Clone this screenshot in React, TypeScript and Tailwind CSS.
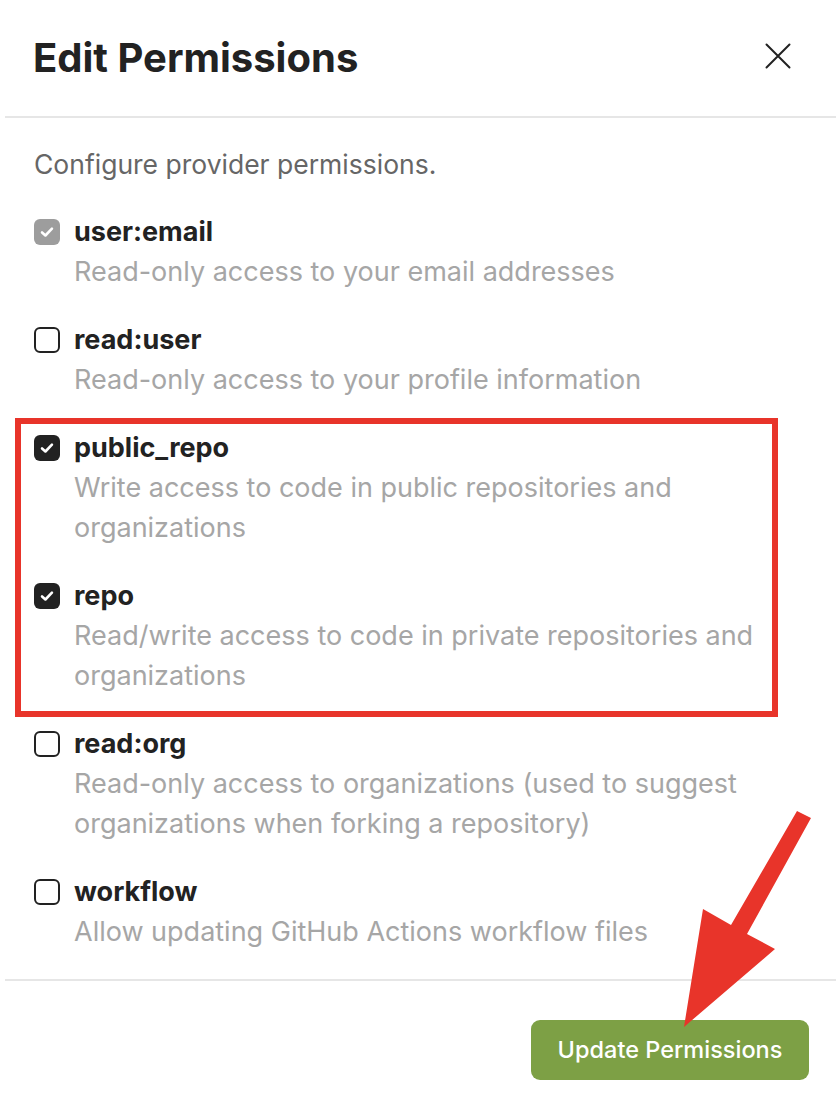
import React from 'react'

type Perm = {
  name: string
  desc: string[]
  state: 'locked' | 'on' | 'off'
}

const perms: Perm[] = [
  { name: 'user:email', desc: ['Read-only access to your email addresses'], state: 'locked' },
  { name: 'read:user', desc: ['Read-only access to your profile information'], state: 'off' },
  { name: 'public_repo', desc: ['Write access to code in public repositories and', 'organizations'], state: 'on' },
  { name: 'repo', desc: ['Read/write access to code in private repositories and', 'organizations'], state: 'on' },
  { name: 'read:org', desc: ['Read-only access to organizations (used to suggest', 'organizations when forking a repository)'], state: 'off' },
  { name: 'workflow', desc: ['Allow updating GitHub Actions workflow files'], state: 'off' },
]

function Checkbox({ state }: { state: Perm['state'] }) {
  if (state === 'off') {
    return <div className="w-[26px] h-[26px] rounded-[6px] border-[2.5px] border-[#222222] bg-white" />
  }
  return (
    <div
      className={
        'w-[26px] h-[26px] rounded-[6px] flex items-center justify-center ' +
        (state === 'locked' ? 'bg-[#9d9d9d]' : 'bg-[#222222]')
      }
    >
      <svg width="18" height="18" viewBox="0 0 16 16" fill="none">
        <path d="M3.6 8.4 L6.6 11.1 L12.4 5" stroke="white" strokeWidth="2.3" strokeLinecap="round" strokeLinejoin="round" />
      </svg>
    </div>
  )
}

export default function App() {
  return (
    <div className="relative w-[836px] h-[1104px] bg-white overflow-hidden" style={{ fontFamily: 'Inter, "Noto Sans", sans-serif' }}>
      <div className="flex items-center justify-between h-[116px] pl-[33px] pr-[45px]">
        <h1 className="text-[40px] font-bold text-[#222222]">Edit Permissions</h1>
        <svg width="26" height="26" viewBox="0 0 26 26" fill="none" className="-mt-[4px]">
          <path d="M1.5 1.5 L24.5 24.5 M24.5 1.5 L1.5 24.5" stroke="#222222" strokeWidth="2" strokeLinecap="round" />
        </svg>
      </div>
      <div className="ml-[5px] h-[2px] bg-[#e6e6e6]" />

      <div className="pt-[26px] pb-[27px] pl-[34px] flex flex-col gap-[28px] text-[27px] leading-[40px]">
        <p className="text-[#666666] text-[26.5px]">Configure provider permissions.</p>
        {perms.map((p) => (
          <div key={p.name} className="flex gap-[14px]">
            <div className="h-[40px] flex items-center shrink-0">
              <Checkbox state={p.state} />
            </div>
            <div>
              <div className="font-bold text-[#222222]">{p.name}</div>
              {p.desc.map((line) => (
                <div key={line} className="text-[#a6a6a6]">{line}</div>
              ))}
            </div>
          </div>
        ))}
      </div>

      <div className="ml-[5px] h-[2px] bg-[#e6e6e6]" />
      <div className="flex justify-end pt-[39px] pr-[27px]">
        <button className="h-[60px] w-[278px] rounded-[9px] bg-[#7da045] text-white text-[23.5px] font-medium">
          Update Permissions
        </button>
      </div>

      <div className="absolute left-[15px] top-[418px] w-[763px] h-[299px] border-[6px] border-[#e8342a]" />

      <svg className="absolute left-0 top-0" width="836" height="1104" viewBox="0 0 836 1104" fill="none">
        <polygon points="797,811 811,818 747,934 775,949 684,1027 703,909 731,925" fill="#e8342a" />
      </svg>
    </div>
  )
}
